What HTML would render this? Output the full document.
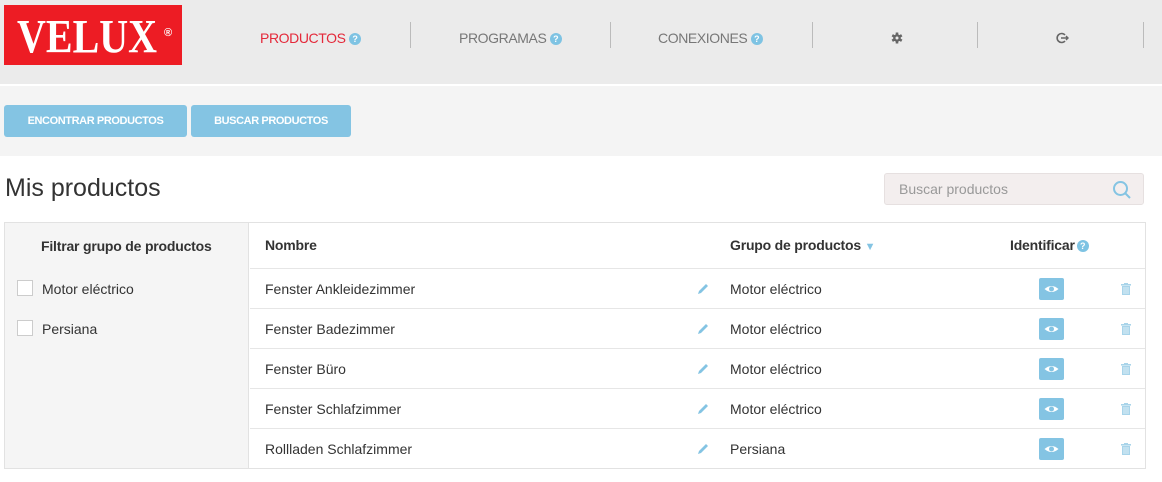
<!DOCTYPE html>
<html><head><meta charset="utf-8"><style>
*{box-sizing:border-box;margin:0;padding:0}
body{width:1162px;height:482px;background:#fff;font-family:"Liberation Sans",sans-serif;position:relative;overflow:hidden;color:#333}
.a{position:absolute}
.hdr{left:0;top:0;width:1162px;height:85px;background:#ebebeb;border-bottom:1px solid #fff}
.logo{left:4px;top:5px;width:178px;height:60px;background:#ed1c24;overflow:hidden}
.logo span.v{position:absolute;left:13px;top:8px;color:#fff;font-family:"Liberation Serif",serif;font-weight:bold;font-size:40px;line-height:40px;letter-spacing:0px;transform:scaleY(1.2);transform-origin:top left}
.nav{font-size:14px;color:#777;top:30px;letter-spacing:-.4px}
.q{display:inline-block;width:12px;height:12px;border-radius:50%;background:#7ec3e3;color:#fff;font-size:9px;line-height:12px;text-align:center;font-weight:bold;vertical-align:1px;letter-spacing:0}
.sep{top:22px;width:1px;height:26px;background:#bbb}
.band{left:0;top:86px;width:1162px;height:70px;background:#f4f4f4}
.btn{top:105px;height:32px;background:#84c4e3;border-radius:3px;color:#fff;font-size:11px;font-weight:bold;text-align:center;line-height:33px;letter-spacing:-.4px}
.tbl{left:4px;top:222px;width:1142px;height:247px;border:1px solid #e2e2e2}
.left{left:5px;top:223px;width:244px;height:245px;background:#f5f5f5;border-right:1px solid #e2e2e2}
.row{left:250px;width:895px;height:1px;background:#e6e6e6}
.t{font-size:14px;color:#333}
.b{font-weight:bold;letter-spacing:-.2px}
.cb{width:16px;height:16px;border:1px solid #ccc;background:#fff;left:17px}
</style></head><body>
<div class="a hdr"></div>
<div class="a logo"><span class="v">VELUX</span><span class="a" style="left:160px;top:22px;color:#fff;font-size:11px;font-weight:bold">®</span></div>
<div class="a nav" style="left:260px;color:#e4293a">PRODUCTOS <span class="q">?</span></div>
<div class="a sep" style="left:410px"></div>
<div class="a nav" style="left:459px">PROGRAMAS <span class="q">?</span></div>
<div class="a sep" style="left:610px"></div>
<div class="a nav" style="left:658px">CONEXIONES <span class="q">?</span></div>
<div class="a sep" style="left:812px"></div>
<svg class="a" style="left:891px;top:32px" width="12" height="12" viewBox="-6 -6 12 12"><g fill="#666"><circle r="3.8"/><rect x="-1.3" y="-5.5" width="2.6" height="11"/><rect x="-1.3" y="-5.5" width="2.6" height="11" transform="rotate(60)"/><rect x="-1.3" y="-5.5" width="2.6" height="11" transform="rotate(120)"/></g><circle r="1.5" fill="#ebebeb"/></svg>
<div class="a sep" style="left:977px"></div>
<svg class="a" style="left:1056px;top:32px" width="13" height="12" viewBox="0 0 13 12"><path d="M9 3A4.5 4.5 0 1 0 9 9" fill="none" stroke="#666" stroke-width="1.6"/><path d="M5 6h7M10 4l2 2-2 2" fill="none" stroke="#666" stroke-width="1.4"/></svg>
<div class="a sep" style="left:1143px"></div>
<div class="a band"></div>
<div class="a btn" style="left:4px;width:183px">ENCONTRAR PRODUCTOS</div>
<div class="a btn" style="left:191px;width:160px">BUSCAR PRODUCTOS</div>
<div class="a" style="left:5px;top:174px;font-size:25px;color:#333">Mis productos</div>
<div class="a" style="left:884px;top:173px;width:260px;height:32px;background:#f3eeee;border:1px solid #e6e0e0;border-radius:3px;font-size:14px;color:#999;padding:7px 0 0 14px">Buscar productos</div>
<svg class="a" style="left:1112px;top:180px" width="20" height="20" viewBox="0 0 20 20"><circle cx="8.5" cy="8.5" r="6.5" fill="none" stroke="#84c4e3" stroke-width="2"/><path d="M13 13l5 5" stroke="#84c4e3" stroke-width="2"/></svg>
<div class="a tbl"></div>
<div class="a left"></div>
<div class="a t b" style="left:41px;top:238px">Filtrar grupo de productos</div>
<div class="a cb" style="top:280px"></div><div class="a t" style="left:42px;top:281px">Motor eléctrico</div>
<div class="a cb" style="top:320px"></div><div class="a t" style="left:42px;top:321px">Persiana</div>
<div class="a t b" style="left:265px;top:237px">Nombre</div>
<div class="a t b" style="left:730px;top:237px">Grupo de productos <span style="color:#84c4e3;font-size:11px">▼</span></div>
<div class="a t b" style="left:1010px;top:237px">Identificar<span class="q" style="margin-left:2px">?</span></div>
<div class="a row" style="top:268px"></div>
<div class="a row" style="top:308px"></div>
<div class="a row" style="top:348px"></div>
<div class="a row" style="top:388px"></div>
<div class="a row" style="top:428px"></div>

<div class="a t" style="left:265px;top:281px">Fenster Ankleidezimmer</div><div class="a t" style="left:730px;top:281px">Motor eléctrico</div>
<div class="a t" style="left:265px;top:321px">Fenster Badezimmer</div><div class="a t" style="left:730px;top:321px">Motor eléctrico</div>
<div class="a t" style="left:265px;top:361px">Fenster Büro</div><div class="a t" style="left:730px;top:361px">Motor eléctrico</div>
<div class="a t" style="left:265px;top:401px">Fenster Schlafzimmer</div><div class="a t" style="left:730px;top:401px">Motor eléctrico</div>
<div class="a t" style="left:265px;top:441px">Rollladen Schlafzimmer</div><div class="a t" style="left:730px;top:441px">Persiana</div>

<svg class="a" style="left:0;top:0" width="1162" height="482">
<defs>
<g id="pen"><path d="M0 11l1-3 7-7 2 2-7 7z" fill="#84c4e3"/></g>
<g id="eye"><path d="M-7 0Q0-6 7 0Q0 6-7 0z" fill="#fff"/><circle r="2.5" fill="#84c4e3"/></g>
<g id="tr"><rect x="-5" y="-5" width="10" height="1.6" fill="#a8d4ea"/><rect x="-2" y="-6" width="4" height="1.2" fill="#a8d4ea"/><rect x="-4" y="-3" width="8" height="9" fill="#a8d4ea"/><path d="M-2-2v7M0-2v7M2-2v7" stroke="#fff" stroke-width=".6"/></g>
</defs>
<use href="#pen" x="698" y="283"/><use href="#pen" x="698" y="323"/><use href="#pen" x="698" y="363"/><use href="#pen" x="698" y="403"/><use href="#pen" x="698" y="443"/>
<rect x="1039" y="278" width="25" height="22" rx="2" fill="#84c4e3"/><use href="#eye" x="1051.5" y="289"/>
<rect x="1039" y="318" width="25" height="22" rx="2" fill="#84c4e3"/><use href="#eye" x="1051.5" y="329"/>
<rect x="1039" y="358" width="25" height="22" rx="2" fill="#84c4e3"/><use href="#eye" x="1051.5" y="369"/>
<rect x="1039" y="398" width="25" height="22" rx="2" fill="#84c4e3"/><use href="#eye" x="1051.5" y="409"/>
<rect x="1039" y="438" width="25" height="22" rx="2" fill="#84c4e3"/><use href="#eye" x="1051.5" y="449"/>
<use href="#tr" x="1126" y="289"/><use href="#tr" x="1126" y="329"/><use href="#tr" x="1126" y="369"/><use href="#tr" x="1126" y="409"/><use href="#tr" x="1126" y="449"/>
</svg>
</body></html>
